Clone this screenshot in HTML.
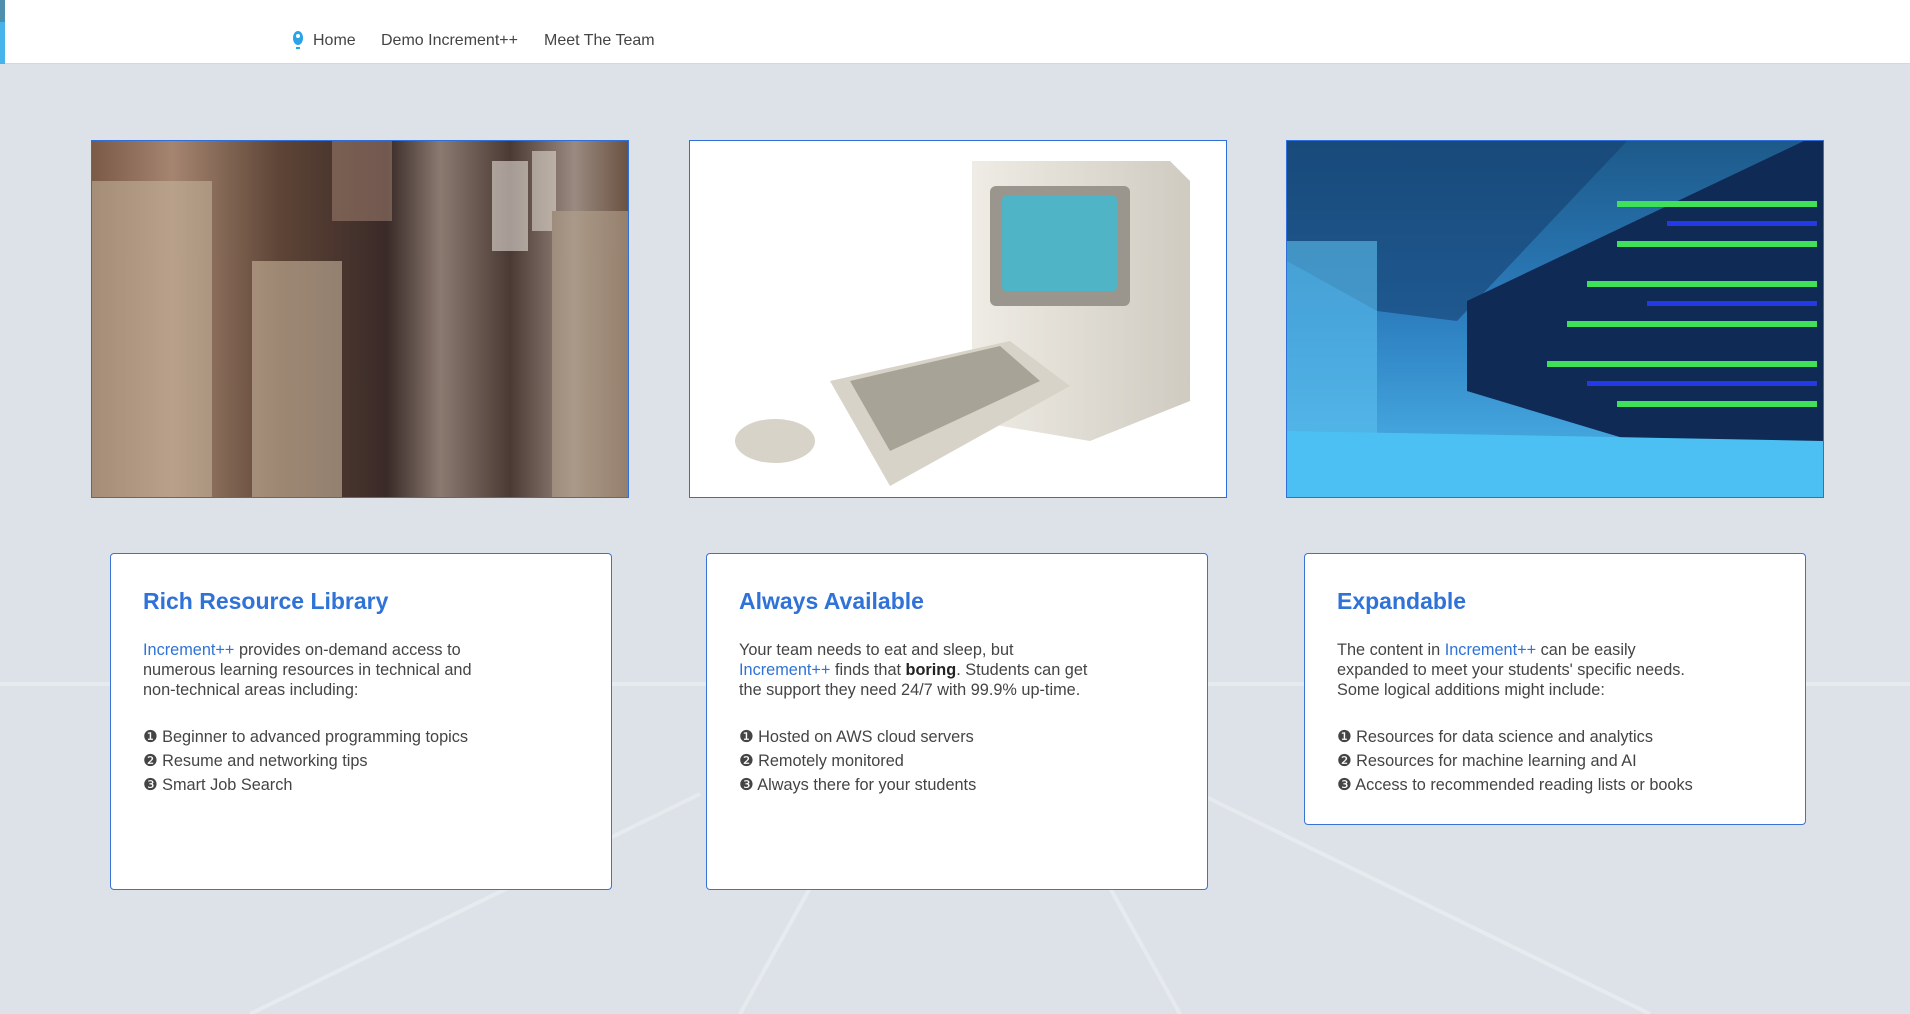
<!DOCTYPE html>
<html><head><meta charset="utf-8"><style>
*{box-sizing:border-box;margin:0;padding:0}
body{width:1910px;height:1014px;overflow:hidden;background:#dde2e8;font-family:"Liberation Sans",sans-serif;position:relative}
.nav{position:absolute;left:0;top:0;width:1910px;height:64px;background:#fff;border-bottom:1px solid #d4d8dd}
.strip{position:absolute;left:0;top:0;width:5px;height:64px;background:#47b3ea}
.strip2{position:absolute;left:0;top:0;width:5px;height:22px;background:#4f8fae}
.nav a{position:absolute;top:32px;font-size:16px;color:#444;text-decoration:none}
.img{position:absolute;top:140px;width:538px;height:358px;border:1px solid #2f6fdc;overflow:hidden}
.card{position:absolute;top:553px;width:502px;background:#fff;border:1px solid #3a73d6;border-radius:4px;padding:33px 32px}
.card h2{font-size:23px;color:#2f72d8;font-weight:bold;margin-bottom:25px;line-height:28px}
.card p{font-size:16.3px;color:#444;line-height:20px;width:360px}
.card ul{list-style:none;margin-top:25px}
.card li{font-size:16.3px;color:#444;line-height:24px}
.b{color:#2f72d8}
.bg{position:absolute;left:0;top:64px}
</style></head><body>
<svg class="bg" width="1910" height="950"><g stroke="#e9edf1" stroke-width="4" fill="none" opacity=".8">
<line x1="0" y1="620" x2="1910" y2="620"/><line x1="250" y1="950" x2="700" y2="730"/><line x1="740" y1="950" x2="840" y2="770"/><line x1="1180" y1="950" x2="1080" y2="770"/><line x1="1650" y1="950" x2="1200" y2="730"/></g></svg>
<div class="nav"><div class="strip"></div><div class="strip2"></div>
<svg style="position:absolute;left:291px;top:30px" width="14" height="20"><ellipse cx="7" cy="8" rx="5" ry="7" fill="#2aa3e8"/><rect x="5" y="17" width="4" height="2" fill="#2aa3e8"/><circle cx="7" cy="6" r="2" fill="#fff"/></svg>
<a style="left:313px">Home</a><a style="left:381px">Demo Increment++</a><a style="left:544px">Meet The Team</a></div>

<div class="img" style="left:91px;background:linear-gradient(90deg,#7a5a48,#a58570 15%,#5d4436 35%,#3a2a28 55%,#8a7a70 65%,#4a3a34 78%,#9a8a80 90%,#6b5242)">
<svg width="538" height="358"><g opacity=".55"><rect x="0" y="40" width="120" height="318" fill="#c9b8a0"/><rect x="240" y="0" width="60" height="80" fill="#a08070"/><rect x="400" y="20" width="36" height="90" fill="#f1ece4"/><rect x="440" y="10" width="24" height="80" fill="#e9e2d8"/><rect x="460" y="70" width="78" height="288" fill="#b8a690"/><rect x="160" y="120" width="90" height="238" fill="#d1bfa5"/></g></svg></div>

<div class="img" style="left:689px;background:#fff">
<svg width="538" height="358"><defs><linearGradient id="s" x1="0" x2="1"><stop offset="0" stop-color="#efece5"/><stop offset="1" stop-color="#cfcbc1"/></linearGradient></defs>
<path d="M282 20 L480 20 L500 40 L500 260 L400 300 L282 280 Z" fill="url(#s)"/>
<rect x="300" y="45" width="140" height="120" rx="6" fill="#9a968d"/><rect x="312" y="55" width="115" height="95" rx="4" fill="#4fb5c6"/>
<path d="M140 240 L320 200 L380 245 L200 345 Z" fill="#d8d3c8"/><path d="M160 240 L310 205 L350 240 L200 310 Z" fill="#a8a397"/>
<ellipse cx="85" cy="300" rx="40" ry="22" fill="#d8d3c8"/></svg></div>

<div class="img" style="left:1286px;background:linear-gradient(180deg,#1d5a8a,#2d7fc0 50%,#4fb8ec)">
<svg width="538" height="358"><path d="M0 0 L340 0 L170 180 L90 170 L0 120Z" fill="#163f70" opacity=".6"/><rect x="0" y="100" width="90" height="200" fill="#5cc0ee" opacity=".6"/>
<path d="M180 160 L538 -10 L538 358 L180 250Z" fill="#0f2a55"/>
<g fill="#3fe05a"><rect x="330" y="60" width="200" height="6"/><rect x="330" y="100" width="200" height="6"/><rect x="300" y="140" width="230" height="6"/><rect x="280" y="180" width="250" height="6"/><rect x="260" y="220" width="270" height="6"/><rect x="330" y="260" width="200" height="6"/></g>
<g fill="#2438e8"><rect x="380" y="80" width="150" height="5"/><rect x="360" y="160" width="170" height="5"/><rect x="300" y="240" width="230" height="5"/></g>
<path d="M0 290 L538 300 L538 358 L0 358Z" fill="#4cc0f2"/></svg></div>

<div class="card" style="left:110px;height:337px"><h2>Rich Resource Library</h2>
<p><span class="b">Increment++</span> provides on-demand access to numerous learning resources in technical and non-technical areas including:</p>
<ul><li>❶ Beginner to advanced programming topics</li><li>❷ Resume and networking tips</li><li>❸ Smart Job Search</li></ul></div>

<div class="card" style="left:706px;height:337px"><h2>Always Available</h2>
<p>Your team needs to eat and sleep, but<br><span class="b">Increment++</span> finds that <b style="color:#222">boring</b>. Students can get the support they need 24/7 with 99.9% up-time.</p>
<ul><li>❶ Hosted on AWS cloud servers</li><li>❷ Remotely monitored</li><li>❸ Always there for your students</li></ul></div>

<div class="card" style="left:1304px;height:272px"><h2>Expandable</h2>
<p>The content in <span class="b">Increment++</span> can be easily<br>expanded to meet your students' specific needs. Some logical additions might include:</p>
<ul><li>❶ Resources for data science and analytics</li><li>❷ Resources for machine learning and AI</li><li>❸ Access to recommended reading lists or books</li></ul></div>
</body></html>
